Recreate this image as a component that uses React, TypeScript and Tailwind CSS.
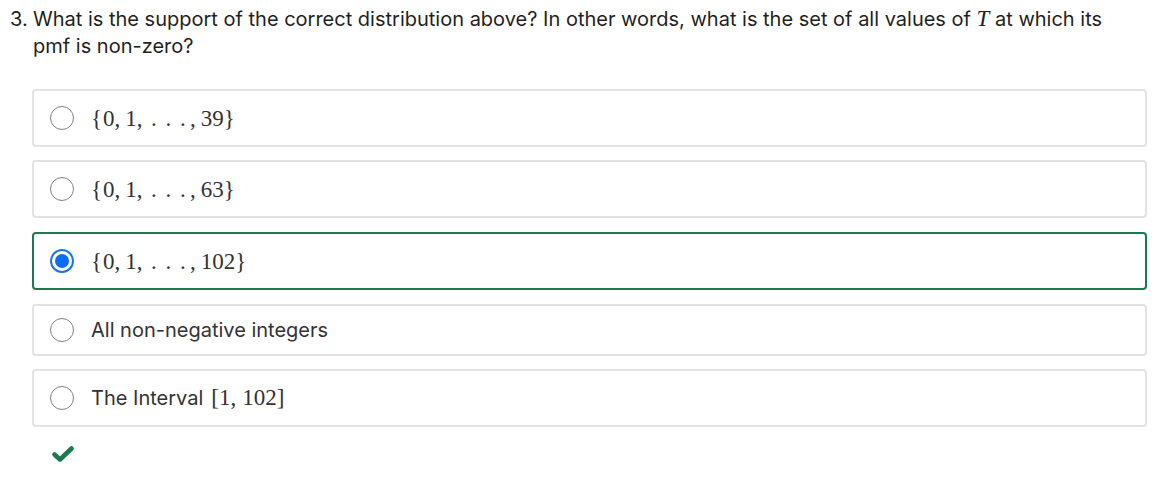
import React from "react";

const serif = { fontFamily: '"Liberation Serif", "DejaVu Serif", serif' };

function Ldots() {
  return (
    <span className="inline-flex">
      <span className="w-[14.5px] text-center">.</span>
      <span className="w-[14.5px] text-center">.</span>
      <span className="w-[14.5px] text-center">.</span>
    </span>
  );
}

function SetMath({ last }: { last: string }) {
  return (
    <span className="text-[23px] text-[#333] whitespace-nowrap leading-none" style={serif}>
      <span>{"{"}</span>
      <span className="ml-[1px]">0,</span>
      <span className="ml-[5px]">1,</span>
      <span className="ml-[4px]">
        <Ldots />
      </span>
      <span>,</span>
      <span className="ml-[5px]">{last}</span>
      <span>{"}"}</span>
    </span>
  );
}

function Radio({ checked }: { checked?: boolean }) {
  if (checked) {
    return (
      <span className="w-[24px] h-[24px] rounded-full border-[2px] border-[#1a73e8] flex items-center justify-center shrink-0">
        <span className="w-[14px] h-[14px] rounded-full bg-[#0b6cf5]" />
      </span>
    );
  }
  return <span className="w-[24px] h-[24px] rounded-full border-[1.5px] border-[#808080] shrink-0 bg-white" />;
}

function Option({
  checked,
  h,
  children,
}: {
  checked?: boolean;
  h: string;
  children: React.ReactNode;
}) {
  return (
    <div
      className={
        "flex items-center rounded-[4px] border-[2px] pl-[16px] gap-[17px] " +
        h +
        " " +
        (checked ? "border-[#1b7a4d]" : "border-[#e2e2e2]")
      }
    >
      <Radio checked={checked} />
      {children}
    </div>
  );
}

export default function App() {
  return (
    <div
      className="w-[1168px] h-[485px] bg-white text-[#1f1f1f] overflow-hidden"
      style={{ fontFamily: 'Inter, "Noto Sans", sans-serif' }}
    >
      <div className="flex pl-[10px] pt-[6px] text-[20px] leading-[27px]">
        <span className="w-[23px] shrink-0">3.</span>
        <p className="w-[1095px]">
          What is the support of the correct distribution above? In other words, what is the set of all values of{" "}
          <span className="italic text-[23px] leading-none" style={serif}>
            T
          </span>{" "}
          at which its pmf is non-zero?
        </p>
      </div>

      <div className="flex flex-col ml-[32px] mr-[21px] mt-[29px]">
        <Option h="h-[58px]">
          <SetMath last="39" />
        </Option>
        <div className="h-[13px]" />
        <Option h="h-[58px]">
          <SetMath last="63" />
        </Option>
        <div className="h-[14px]" />
        <Option h="h-[58px]" checked>
          <SetMath last="102" />
        </Option>
        <div className="h-[14px]" />
        <Option h="h-[52px]">
          <span className="text-[20px] text-[#333]">All non-negative integers</span>
        </Option>
        <div className="h-[13px]" />
        <Option h="h-[58px]">
          <span className="flex items-baseline">
            <span className="text-[20px] text-[#333]">The Interval</span>
            <span className="ml-[8px] text-[23px] text-[#333] leading-none" style={serif}>
              [1,<span className="ml-[6px]">102</span>]
            </span>
          </span>
        </Option>
      </div>

      <div className="ml-[52px] mt-[19px]">
        <svg width="22" height="16" viewBox="0 0 22 16">
          <path d="M2.5 8.5 L8 13.5 L19.5 2.5" fill="none" stroke="#197a4a" strokeWidth="4.5" strokeLinecap="round" strokeLinejoin="round" />
        </svg>
      </div>
    </div>
  );
}
